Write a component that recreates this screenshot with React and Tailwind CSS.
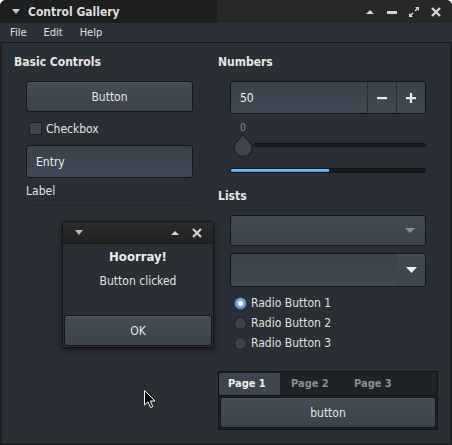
import React from "react";

const font = "font-['DejaVu_Sans_Condensed','DejaVu_Sans',sans-serif]";

function Btn({ className = "", children }) {
  return (
    <div
      className={`flex items-center justify-center rounded-[3px] border border-[#15171a] bg-[linear-gradient(180deg,#444c56,#3b434c)] shadow-[inset_0_1px_0_rgba(255,255,255,0.06)] text-[#e4e4e4] ${className}`}
    >
      {children}
    </div>
  );
}

function Radio({ on, label }) {
  return (
    <div className="flex h-[20px] items-center pl-[4px]">
      {on ? (
        <div className="flex h-[13px] w-[13px] items-center justify-center rounded-full border border-[#2a4a6a] bg-[radial-gradient(circle_at_50%_35%,#8cc0ea,#4f8fc8)]">
          <div className="h-[5px] w-[5px] rounded-full bg-white" />
        </div>
      ) : (
        <div className="h-[13px] w-[13px] rounded-full border border-[#1c1f23] bg-[#3a424b]" />
      )}
      <span className="ml-[4px] text-[#e0e0e0]">{label}</span>
    </div>
  );
}

export default function App() {
  return (
    <div
      className={`relative flex h-[445px] w-[452px] flex-col overflow-hidden rounded-t-[6px] bg-[#2a2e35] text-[12px] leading-[14px] text-[#e2e2e2] ${font} font-stretch-condensed`}
    >
      {/* Title bar */}
      <div className="flex h-[23px] shrink-0 items-center bg-[linear-gradient(90deg,#1e1f21_48%,#27282a_48%)] pl-[12px] pr-[10px]">
        <svg width="8" height="5" viewBox="0 0 8 5">
          <polygon points="0,0 8,0 4,5" fill="#c8c8c8" />
        </svg>
        <span className="ml-[8px] text-[12px] font-bold text-[#dcdcdc]">Control Gallery</span>
        <div className="ml-auto flex items-center gap-[10px]">
          <svg width="12" height="12" viewBox="0 0 12 12">
            <polygon points="2,8 6,4 10,8" fill="#d4d4d4" />
          </svg>
          <svg width="12" height="12" viewBox="0 0 12 12">
            <rect x="1" y="5" width="10" height="3" fill="#d4d4d4" />
          </svg>
          <svg width="12" height="12" viewBox="0 0 12 12">
            <path d="M7 1 H11 V5 L9.5 3.5 L7.5 5.5 L6.5 4.5 L8.5 2.5 Z M5 11 H1 V7 L2.5 8.5 L4.5 6.5 L5.5 7.5 L3.5 9.5 Z" fill="#d4d4d4" />
          </svg>
          <svg width="12" height="12" viewBox="0 0 12 12">
            <path d="M2 2 L10 10 M10 2 L2 10" stroke="#d4d4d4" strokeWidth="2.4" />
          </svg>
        </div>
      </div>

      {/* Menu bar */}
      <div className="flex h-[20px] shrink-0 items-center border-b border-[#17191c] bg-[#2c3139] pt-[1px] text-[11px] text-[#e0e0e0]">
        <span className="ml-[10px]">File</span>
        <span className="ml-[17px]">Edit</span>
        <span className="ml-[17px]">Help</span>
      </div>

      {/* Body */}
      <div className="flex flex-1 border-x-2 border-b-2 border-[#1d2024] pl-[12px] pt-[12px]">
        {/* Left column */}
        <div className="flex w-[179px] flex-col">
          <div className="h-[14px] text-[12px] font-bold text-[#e6e6e6]">Basic Controls</div>
          <div className="flex flex-col pl-[12px]">
            <Btn className="mt-[12px] h-[31px] w-[167px]">Button</Btn>
            <div className="mt-[10px] flex h-[13px] items-center pl-[3px]">
              <div className="h-[13px] w-[13px] border border-[#1b1d21] bg-[#3d4650]" />
              <span className="ml-[4px]">Checkbox</span>
            </div>
            <div className="mt-[10px] flex h-[33px] w-[167px] items-center rounded-[3px] border border-[#15171a] bg-[linear-gradient(180deg,#3a424b,#414a54)] pl-[9px] text-[#ececec]">
              Entry
            </div>
            <div className="mt-[6px] h-[14px]">Label</div>
            <div className="mt-[7px] h-px w-[167px] bg-[#23262b]" />
          </div>
        </div>

        {/* Right column */}
        <div className="ml-[25px] flex w-[220px] flex-col">
          <div className="h-[14px] text-[12px] font-bold text-[#e6e6e6]">Numbers</div>
          <div className="flex flex-col pl-[12px]">
            <div className="mt-[12px] flex h-[33px] w-[196px] overflow-hidden rounded-[3px] border border-[#15171a] bg-[linear-gradient(180deg,#3a424b,#414a54)]">
              <div className="flex flex-1 items-center pl-[9px] text-[#ececec]">50</div>
              <div className="flex w-[29px] items-center justify-center border-l border-[#2a2f35]">
                <svg width="12" height="12" viewBox="0 0 12 12">
                  <rect x="1" y="5" width="10" height="2.2" fill="#e8e8e8" />
                </svg>
              </div>
              <div className="flex w-[29px] items-center justify-center border-l border-[#2a2f35]">
                <svg width="12" height="12" viewBox="0 0 12 12">
                  <rect x="1" y="5" width="10" height="2.2" fill="#e8e8e8" />
                  <rect x="4.9" y="1" width="2.2" height="10" fill="#e8e8e8" />
                </svg>
              </div>
            </div>
            <div className="mt-[8px] h-[11px] pl-[10px] text-[10px] leading-[11px] text-[#8a8d92]">0</div>
            <div className="flex h-[24px] items-center pl-[3px]">
              <svg width="20" height="24" viewBox="0 0 20 24" className="shrink-0">
                <path d="M10 1 C12 6 19 9.5 19 15 A9 8.5 0 0 1 1 15 C1 9.5 8 6 10 1 Z" fill="#3d4650" stroke="#17191c" strokeWidth="1" />
              </svg>
              <div className="mr-[12px] h-[4px] flex-1 rounded-[2px] border border-[#121417] bg-[#1a1d21]" />
            </div>
            <div className="mt-[11px] h-[5px] w-[196px] overflow-hidden rounded-[2px] border border-[#121417] bg-[#181a1e]">
              <div className="h-full w-[98px] bg-[linear-gradient(180deg,#8cc8f4,#3a98e4)]" />
            </div>
          </div>

          <div className="mt-[16px] h-[14px] text-[12px] font-bold text-[#e6e6e6]">Lists</div>
          <div className="flex flex-col pl-[12px]">
            <div className="mt-[12px] flex h-[31px] w-[196px] items-center justify-end rounded-[3px] border border-[#15171a] bg-[linear-gradient(180deg,#444c56,#3b434c)] pr-[10px]">
              <svg width="10" height="6" viewBox="0 0 10 6">
                <polygon points="0,0 10,0 5,5" fill="#8a8f95" />
              </svg>
            </div>
            <div className="mt-[7px] flex h-[34px] w-[196px] overflow-hidden rounded-[3px] border border-[#15171a] bg-[linear-gradient(180deg,#3a424b,#414a54)]">
              <div className="flex-1" />
              <div className="flex w-[28px] items-center justify-center bg-[linear-gradient(180deg,#424a54,#3d454e)]">
                <svg width="11" height="7" viewBox="0 0 11 7">
                  <polygon points="0,0 11,0 5.5,6" fill="#f2f2f2" />
                </svg>
              </div>
            </div>
            <div className="mt-[6px] flex flex-col">
              <Radio on label="Radio Button 1" />
              <Radio label="Radio Button 2" />
              <Radio label="Radio Button 3" />
            </div>
          </div>

          {/* Notebook */}
          <div className="mt-[18px] flex h-[59px] w-[220px] flex-col border border-[#111316] bg-[#1f2226]">
            <div className="flex h-[23px] items-end text-[11px] font-bold">
              <div className="flex h-[22px] w-[61px] items-center rounded-t-[2px] bg-[#3d4650] pl-[9px] text-[#ededed]">Page 1</div>
              <div className="flex h-[22px] w-[62px] items-center pl-[11px] text-[#8b8e92]">Page 2</div>
              <div className="flex h-[22px] w-[62px] items-center pl-[12px] text-[#8b8e92]">Page 3</div>
            </div>
            <div className="flex-1 border-t border-[#111316] p-[1px]">
              <Btn className="h-[31px] w-full">button</Btn>
            </div>
          </div>
        </div>
      </div>

      {/* Dialog */}
      <div className="absolute left-[62px] top-[221px] flex h-[127px] w-[152px] flex-col overflow-hidden rounded-t-[5px] border border-[#121417] bg-[#2a2e35] shadow-[0_2px_6px_rgba(0,0,0,0.5)]">
        <div className="flex h-[22px] shrink-0 items-center border-b border-[#17191c] bg-[linear-gradient(180deg,#2a2b2d,#202123)] pl-[12px] pr-[10px]">
          <svg width="8" height="5" viewBox="0 0 8 5">
            <polygon points="0,0 8,0 4,5" fill="#b8b8b8" />
          </svg>
          <div className="ml-auto flex items-center gap-[10px]">
            <svg width="12" height="12" viewBox="0 0 12 12">
              <polygon points="2,8 6,4 10,8" fill="#d4d4d4" />
            </svg>
            <svg width="12" height="12" viewBox="0 0 12 12">
              <path d="M2 2 L10 10 M10 2 L2 10" stroke="#d4d4d4" strokeWidth="2.2" />
            </svg>
          </div>
        </div>
        <div className="mt-[6px] text-center text-[13px] font-bold text-[#ececec]">Hoorray!</div>
        <div className="mt-[10px] text-center text-[#e0e0e0]">Button clicked</div>
        <div className="mt-auto p-[1px] pb-[1px]">
          <Btn className="h-[31px] w-full">OK</Btn>
        </div>
      </div>

      {/* Mouse cursor */}
      <svg className="absolute left-[144px] top-[390px]" width="13" height="20" viewBox="0 0 13 20">
        <path d="M0.5 0.5 L0.5 15 L4 11.8 L6.6 17.6 L8.8 16.6 L6.3 11 L11 11 Z" fill="#000" stroke="#fff" strokeWidth="1" />
      </svg>
    </div>
  );
}
